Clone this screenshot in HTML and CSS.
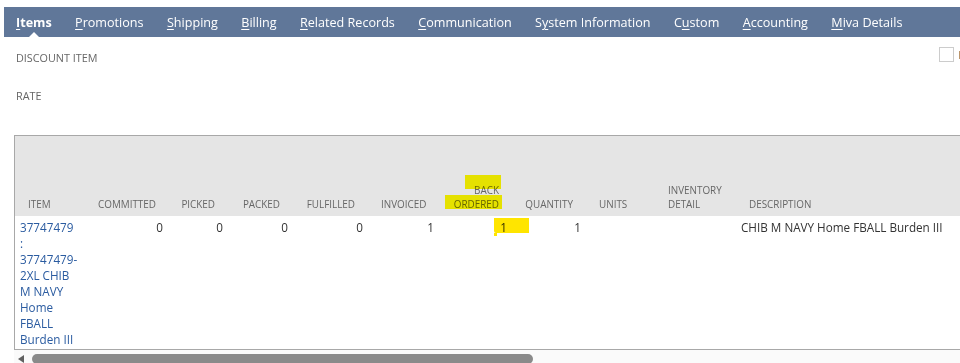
FILE: index.html
```html
<html>

<head>
    <link rel="stylesheet" href="styles.css">
</head>

<body>
    <div id="page">
        <div id="tabs">
            <a class="tab active"><u>I</u>tems<span class="pointer"></span></a>
            <a class="tab"><u>P</u>romotions</a>
            <a class="tab"><u>S</u>hipping</a>
            <a class="tab"><u>B</u>illing</a>
            <a class="tab"><u>R</u>elated Records</a>
            <a class="tab"><u>C</u>ommunication</a>
            <a class="tab">S<u>y</u>stem Information</a>
            <a class="tab">C<u>u</u>stom</a>
            <a class="tab"><u>A</u>ccounting</a>
            <a class="tab"><u>M</u>iva Details</a>
        </div>

        <div id="fields">
            <div class="fieldCol">
                <div class="field"><span class="label">Discount Item</span></div>
                <div class="field"><span class="label">Rate</span></div>
            </div>
            <div class="checkCol">
                <span class="checkbox"></span>
                <span class="checkLabel">Is Taxable</span>
            </div>
        </div>

        <div id="sublist">
            <div class="gridWrap">
                <table class="grid">
                    <colgroup>
                        <col style="width:70px">
                        <col style="width:83px">
                        <col style="width:60px">
                        <col style="width:65px">
                        <col style="width:75px">
                        <col style="width:71px">
                        <col style="width:73px">
                        <col style="width:74px">
                        <col style="width:69px">
                        <col style="width:81px">
                        <col style="width:320px">
                        <col style="width:120px">
                    </colgroup>
                    <tr class="headRow">
                        <th>Item</th>
                        <th class="num">Committed</th>
                        <th class="num">Picked</th>
                        <th class="num">Packed</th>
                        <th class="num">Fulfilled</th>
                        <th class="num">Invoiced</th>
                        <th class="num">Back<br>Ordered</th>
                        <th class="num">Quantity</th>
                        <th>Units</th>
                        <th>Inventory<br>Detail</th>
                        <th>Description</th>
                        <th>Amount</th>
                    </tr>
                    <tr class="dataRow">
                        <td><a class="itemLink">37747479<br>:<br>37747479-<br>2XL CHIB<br>M NAVY<br>Home<br>FBALL<br>Burden III</a></td>
                        <td class="num">0</td>
                        <td class="num">0</td>
                        <td class="num">0</td>
                        <td class="num">0</td>
                        <td class="num">1</td>
                        <td class="num">1</td>
                        <td class="num">1</td>
                        <td></td>
                        <td></td>
                        <td>CHIB M NAVY Home FBALL Burden III</td>
                        <td></td>
                    </tr>
                </table>
                <!-- marker highlights -->
                <span class="mark markBack"></span>
                <span class="mark markOrdered"></span>
                <span class="mark markValue"></span>
            </div>
            <div class="hscroll">
                <span class="arrowLeft"></span>
                <span class="thumb"></span>
            </div>
        </div>
    </div>
</body>

</html>
```

FILE: styles.css
```css
html,
body {
    overflow: hidden;
}

body {
    margin: 0;
    font-family: 'Open Sans', 'Liberation Sans', sans-serif;
    color: #333;
    background: #fff;
}

#page {
    padding: 7px 0 0 4px;
    width: 1400px;
}

#tabs {
    display: flex;
    gap: 23.35px;
    height: 30px;
    padding-left: 12px;
    background: #607799;
}

.tab {
    position: relative;
    color: #fff;
    font-size: 12.6px;
    line-height: 31px;
    white-space: nowrap;
}

.tab u {
    text-decoration-thickness: 1px;
    text-underline-offset: 2px;
}

.tab.active {
    font-weight: bold;
}

.tab .pointer {
    position: absolute;
    left: 50%;
    bottom: 0;
    margin-left: -5px;
    border-left: 5px solid transparent;
    border-right: 5px solid transparent;
    border-bottom: 5px solid #fff;
}

#fields {
    display: flex;
    padding: 13px 0 0 12px;
}

.fieldCol {
    flex: 0 0 923px;
}

.field {
    height: 38px;
}

.label {
    font-size: 10.8px;
    line-height: 15px;
    text-transform: uppercase;
    color: #666;
}

.checkCol {
    display: flex;
    align-items: center;
    gap: 4px;
    height: 15px;
    margin-top: -3px;
}

.checkbox {
    width: 13px;
    height: 13px;
    border: 1px solid #ccc;
    background: #fff;
}

.checkLabel {
    font-size: 10.8px;
    color: #b58c5f;
    text-transform: uppercase;
}

#sublist {
    margin: 9px 0 0 10px;
}

.gridWrap {
    position: relative;
    border: 1px solid #a8a8a8;
    border-right: none;
    background: #fff;
}

.grid {
    border-collapse: collapse;
    table-layout: fixed;
    width: 1111px;
}

.headRow {
    height: 80px;
    background: #e5e5e5;
}

.headRow th {
    vertical-align: bottom;
    padding: 0 13px 5px;
    font-size: 9.9px;
    line-height: 14px;
    font-weight: normal;
    text-transform: uppercase;
    text-align: left;
    color: #666;
    white-space: nowrap;
}

.headRow th.num {
    text-align: right;
}

.dataRow td {
    vertical-align: top;
    padding: 3px 5px 2px;
    font-size: 11.7px;
    line-height: 16px;
    color: #333;
    white-space: nowrap;
}

.dataRow td.num {
    text-align: right;
}

.itemLink {
    color: #2a5ba0;
}

.mark {
    position: absolute;
    mix-blend-mode: multiply;
}

.markBack {
    left: 450px;
    top: 39px;
    width: 36px;
    height: 14px;
    background: #fffb00;
}

.markOrdered {
    left: 430px;
    top: 59px;
    width: 57px;
    height: 14px;
    background: #fffb00;
}

.markValue {
    left: 479px;
    top: 82px;
    width: 35px;
    height: 15px;
    background: #ffe500;
    border-bottom-left-radius: 2px;
}

.markValue::after {
    content: "";
    position: absolute;
    left: 0;
    top: 15px;
    width: 3px;
    height: 3px;
    background: #ffe500;
}

.hscroll {
    display: flex;
    align-items: center;
    height: 10px;
    padding: 4px 0 0 4px;
    background: #fafafa;
}

.arrowLeft {
    border-top: 4px solid transparent;
    border-bottom: 4px solid transparent;
    border-right: 6px solid #606060;
    margin-right: 8px;
}

.thumb {
    width: 501px;
    height: 10px;
    border-radius: 5px;
    background: #8a8a8a;
}
```
